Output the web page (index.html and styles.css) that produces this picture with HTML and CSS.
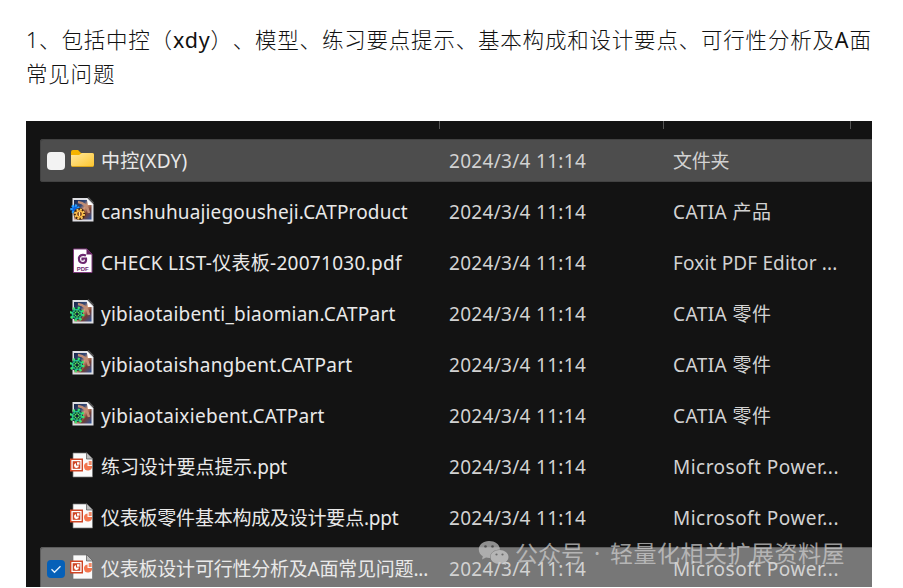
FILE: index.html
```html
<!DOCTYPE html>
<html lang="zh-CN">
<head>
<meta charset="utf-8">
<title>文件列表</title>
<link rel="stylesheet" href="styles.css">
</head>
<body>
<svg class="defs" width="0" height="0">
  <defs>
    <linearGradient id="fold" x1="0" y1="0" x2="1" y2="1"><stop offset="0" stop-color="#ffe8a0"/><stop offset="1" stop-color="#fdc52c"/></linearGradient>
    <linearGradient id="sky" x1="0" y1="0" x2="1" y2="1"><stop offset="0" stop-color="#172448"/><stop offset=".35" stop-color="#354a78"/><stop offset=".5" stop-color="#d69b7b"/><stop offset=".7" stop-color="#743d32"/><stop offset="1" stop-color="#2855a0"/></linearGradient>
    <symbol id="folder" viewBox="0 0 24 26"><path d="M1 6q0-2 2-2h5l3 3h11q2 0 2 2v4H1z" fill="#f5b400"/><path d="M1 9h8l3-2h10q2 0 2 2v10q0 2-2 2H3q-2 0-2-2z" fill="url(#fold)"/><path d="M2 20.5h21" stroke="#dba51c"/></symbol>
    <symbol id="cat" viewBox="0 0 24 26"><path d="M2.500 1h15L23.500 7v17.500h-21z" fill="#dedee3"/><path d="M4 3h13l4.500 5v14.500H4z" fill="url(#sky)"/><path d="M8 5q9 1 11 11" fill="none" stroke="#c08d75" stroke-width="2.500"/><path d="M16.500 1L23 8h-5z" fill="#fff"/><path d="M18 .5l5.500 5.500" stroke="#555" stroke-width="1.500"/></symbol>
    <symbol id="product" viewBox="0 0 24 26"><use href="#cat"/><circle cx="5" cy="12" r="3.500" fill="#0b65e0" stroke="#279fff" stroke-width="2.500" stroke-dasharray="2 1.200"/><circle cx="9.500" cy="17" r="3.500" fill="none" stroke="#41210c" stroke-width="5"/><circle cx="9.500" cy="17" r="4.500" fill="none" stroke="#f9c65b" stroke-width="2" stroke-dasharray="2 1.500"/><circle cx="9.500" cy="17" r="3" fill="#5c260c" stroke="#ffbd48" stroke-width="1.500"/><path d="M9.500 15v4" stroke="#ffe19a" stroke-width="1.500"/></symbol>
    <symbol id="part" viewBox="0 0 24 26"><use href="#cat"/><circle cx="7" cy="15" r="6" fill="#0b493b" stroke="#3be36c" stroke-width="3" stroke-dasharray="2 2.710"/><circle cx="7" cy="15" r="4.500" fill="#0b5545" stroke="#25c5a0" stroke-width="1.200"/><path d="M3 15h8M7 11v8M4.500 12.500l5 5M9.500 12.500l-5 5" stroke="#65e65d"/><circle cx="7" cy="15" r="1.500" fill="#123"/></symbol>
    <symbol id="pdf" viewBox="0 0 24 26"><path d="M3.500 1H17l5 5v18.500H3.500z" fill="#fff" stroke="#7e397c"/><path d="M16.500.5L22.500 6.500h-6z" fill="#63205f"/><path d="M16 7.500q-5-2-7 2-.5 5.500 4 5.500 3.500 0 3-4.500h-3.500v2" fill="none" stroke="#6c2a70" stroke-width="2.200"/><text x="12.700" y="22.500" text-anchor="middle" class="pdf-label">PDF</text></symbol>
    <symbol id="ppt" viewBox="0 0 24 26"><path d="M3 1h14l5.500 5.500V25H3z" fill="#fafafa" stroke="#777" stroke-width=".7"/><path d="M16.500.5L23 7h-6.500z" fill="#bcbcbc" stroke="#555" stroke-width=".7"/><path d="M17.500 10.500v3.500h4.500a4 4 0 1 1-4.500-3.500z" fill="#f4754d"/><path d="M18.700 9h3v4h-3z" fill="#f58b67"/><path d="M.7 7.200h11.600v11.600H.7z" fill="#fff" stroke="#ce4525" stroke-width="1.400"/><path d="M2.700 9.200h7.600v7.600H2.700z" fill="#ce4525"/><path d="M6 11v2.500h3A2.500 2.500 0 1 1 6 11z" fill="#fff"/><path d="M7 10.200h2.500v2.500H7z" fill="#fff"/></symbol>
  </defs>
</svg>
<p class="intro">1、包括中控（<span class="latin">xdy</span>）、模型、练习要点提示、基本构成和设计要点、可行性分析及<span class="latin">A</span>面常见问题</p>
<main class="explorer">
  <div class="header"><i></i><i></i><i></i></div>
  <div class="row hover"><span class="box"></span><svg class="icon"><use href="#folder"/></svg><span class="name n1">中控(XDY)</span><span class="date">2024/3/4 11:14</span><span class="type folder">文件夹</span></div>
  <div class="row"><span></span><svg class="icon"><use href="#product"/></svg><span class="name n2">canshuhuajiegousheji.CATProduct</span><span class="date">2024/3/4 11:14</span><span class="type">CATIA 产品</span></div>
  <div class="row"><span></span><svg class="icon"><use href="#pdf"/></svg><span class="name n3">CHECK LIST-仪表板-20071030.pdf</span><span class="date">2024/3/4 11:14</span><span class="type foxit">Foxit PDF Editor ...</span></div>
  <div class="row"><span></span><svg class="icon"><use href="#part"/></svg><span class="name n4">yibiaotaibenti_biaomian.CATPart</span><span class="date">2024/3/4 11:14</span><span class="type">CATIA 零件</span></div>
  <div class="row"><span></span><svg class="icon"><use href="#part"/></svg><span class="name n5">yibiaotaishangbent.CATPart</span><span class="date">2024/3/4 11:14</span><span class="type">CATIA 零件</span></div>
  <div class="row"><span></span><svg class="icon"><use href="#part"/></svg><span class="name n6">yibiaotaixiebent.CATPart</span><span class="date">2024/3/4 11:14</span><span class="type">CATIA 零件</span></div>
  <div class="row"><span></span><svg class="icon"><use href="#ppt"/></svg><span class="name n7">练习设计要点提示.ppt</span><span class="date">2024/3/4 11:14</span><span class="type power">Microsoft Power...</span></div>
  <div class="row"><span></span><svg class="icon"><use href="#ppt"/></svg><span class="name n8">仪表板零件基本构成及设计要点.ppt</span><span class="date">2024/3/4 11:14</span><span class="type power">Microsoft Power...</span></div>
  <div class="row selected"><span class="box checked"><svg width="18" height="18" viewBox="0 0 18 18"><path d="M4.500 9.300l3 3 6-6" fill="none" stroke="#e6f2ff" stroke-width="1.300"/></svg></span><svg class="icon"><use href="#ppt"/></svg><span class="name n9">仪表板设计可行性分析及A面常见问题...</span><span class="date">2024/3/4 11:14</span><span class="type power">Microsoft Power...</span></div>
  <div class="watermark"><svg width="32" height="26" viewBox="0 0 32 26"><path d="M11 1C5 1 .8 4.800.8 9.500c0 3 1.500 5.200 4 6.700L4 19.500l4-2q2 .5 4 .4c0-5 4-8.500 10-8.500C21.500 4 17 1 11 1z" fill="#c4c4c4"/><path d="M21.500 10c-5 0-9 3-9 7s4 7 9 7q1.700 0 3.200-.4l3.300 1.700-.7-2.900c2-1.300 3.200-3.200 3.200-5.400 0-4-4-7-9-7z" fill="#d0d0d0"/><g fill="#666"><circle cx="7.500" cy="6.500" r="1.300"/><circle cx="14.500" cy="6.500" r="1.300"/><circle cx="18.500" cy="14.500" r="1.100"/><circle cx="24.500" cy="14.500" r="1.100"/></g></svg><span class="account">公众号</span><span class="dot">·</span><span class="brand">轻量化相关扩展资料屋</span></div>
</main>
</body>
</html>
```
FILE: styles.css
```css
body { margin: 0; background: #fff; height: 588px; overflow: hidden; font-family: "Noto Sans", "Noto Sans CJK SC", sans-serif; }
.defs { position: absolute; }
.intro { margin: 0; padding: 23px 0 0 26px; width: 876px; height: 121px; box-sizing: border-box; font-size: 21.500px; line-height: 34px; letter-spacing: .8px; font-weight: 300; color: #111; text-spacing-trim: space-all; }
.latin { font-weight: 400; }
.explorer { position: relative; margin-left: 26px; width: 846px; height: 466px; background: #131313; overflow: hidden; }
.header { height: 18px; display: grid; grid-template-columns: 224px 187px 1px; padding-left: 413px; }
.header i { width: 1px; height: 8px; background: #555; }
.row { box-sizing: border-box; height: 43px; margin: 0 0 8px 14px; padding-left: 7px; display: grid; grid-template-columns: 23px 31px 348px 224px 1fr; align-items: center; border-radius: 3px 0 0 3px; font-size: 19px; line-height: 45px; color: #e9e9e9; white-space: nowrap; }
.hover { background: #4d4d4d; box-shadow: inset 1px 1px #424242, inset 0 -1px #424242; }
.selected { background: #777; box-shadow: inset 1px 1px #5c5c5c; }
.box { width: 18px; height: 18px; border-radius: 4px; background: #f3f3f3; }
.checked { background: #0560b8; }
.checked svg { display: block; }
.icon { width: 24px; height: 26px; margin-top: -3px; }
.pdf-label { font: bold 6px "Liberation Sans", sans-serif; fill: #6c2a70; }
.name, .date, .type { display: block; height: 43px; }
.date, .type { color: #d2d2d2; letter-spacing: .3px; }
.n1 { letter-spacing: .2px; }
.n2 { letter-spacing: .14px; }
.n3 { letter-spacing: .28px; }
.n4, .n5 { letter-spacing: .2px; }
.n6 { letter-spacing: .29px; }
.n7 { letter-spacing: -.1px; }
.n8, .n9 { letter-spacing: -.22px; }
.type { letter-spacing: .45px; }
.folder { letter-spacing: -.2px; }
.foxit { letter-spacing: .15px; }
.power { letter-spacing: .47px; }
.watermark { position: absolute; left: 452px; top: 417px; display: flex; height: 30px; align-items: center; color: #d0d0d0; opacity: .7; font-size: 23px; line-height: 30px; white-space: nowrap; }
.account { margin-left: 5px; }
.dot { width: 26px; text-align: center; }
.brand { letter-spacing: .5px; }
```
